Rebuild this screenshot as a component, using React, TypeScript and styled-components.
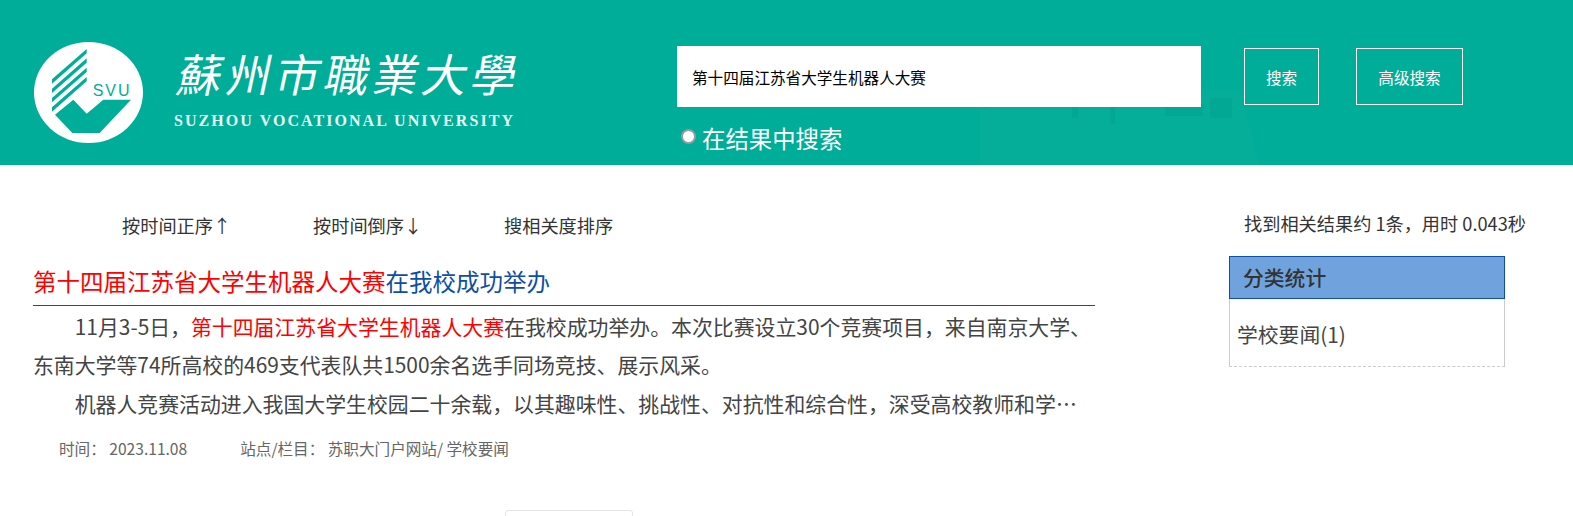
import React from 'react';
import styled, { createGlobalStyle } from 'styled-components';

const GlobalStyle = createGlobalStyle`
  html, body {
    margin: 0;
    height: 516px;
    overflow: hidden;
    background: #fff;
    font-family: "Noto Sans CJK SC", "Noto Sans", sans-serif;
    color: #333;
  }
`;

const Header = styled.header`
  position: relative;
  display: flex;
  height: 165px;
  background: #00ad98;
  overflow: hidden;
`;

const Watermark = styled.svg`
  position: absolute;
  left: 960px;
  top: 60px;
  width: 400px;
  height: 105px;
`;

const Brand = styled.div`
  position: relative;
  display: flex;
  width: 677px;
  padding: 42px 0 0 34px;
  box-sizing: border-box;
`;

const BrandText = styled.div`
  margin: -1px 0 0 29px;
  width: 345px;
`;

const BrandName = styled.div`
  height: 64px;
  font-family: "Noto Sans CJK TC", sans-serif;
  font-size: 45px;
  line-height: 64px;
  letter-spacing: 4px;
  color: #fff;
  font-weight: 400;
  white-space: nowrap;
  transform: skewX(-12deg);
  transform-origin: left bottom;
`;

const BrandEnglish = styled.div`
  margin: 4px 0 0 2px;
  font-family: "Liberation Serif", serif;
  font-size: 16px;
  font-weight: 700;
  letter-spacing: 2.05px;
  line-height: 24px;
  color: #e6f7f4;
  white-space: nowrap;
`;

const SearchArea = styled.div`
  position: relative;
  padding-top: 46px;
`;

const SearchRow = styled.div`
  display: flex;
  align-items: center;
`;

const SearchInput = styled.input`
  width: 524px;
  height: 61px;
  box-sizing: border-box;
  border: 0;
  padding: 0 15px;
  background: #fff;
  color: #000;
  font: 15.6px "Noto Sans CJK SC", sans-serif;
  outline: none;
`;

const SearchButton = styled.button<{ $width: number; $gap: number }>`
  width: ${(p) => p.$width}px;
  height: 57px;
  margin-left: ${(p) => p.$gap}px;
  box-sizing: border-box;
  border: 1px solid #fff;
  background: transparent;
  color: #fff;
  font: 15.6px "Noto Sans CJK SC", sans-serif;
  padding: 0;
`;

const WithinResults = styled.label`
  display: flex;
  align-items: center;
  height: 34px;
  margin-top: 14px;
  font-size: 23.4px;
  color: #fff;
`;

const Radio = styled.input`
  appearance: none;
  width: 15px;
  height: 15px;
  margin: 0 6px 4px 4px;
  box-sizing: border-box;
  border: 2px solid #9a9aa5;
  border-radius: 50%;
  background: #fff;
`;

const Body = styled.div`
  display: flex;
  align-items: flex-start;
`;

const Results = styled.main`
  width: 1095px;
  padding-left: 33px;
  box-sizing: border-box;
`;

const SortBar = styled.div`
  display: flex;
  padding: 45px 0 0 89px;
`;

const SortItem = styled.a`
  width: 191px;
  font-size: 18.2px;
  line-height: 30px;
  color: #333;
`;

const ResultTitle = styled.h2`
  margin: 23px 0 0;
  padding-bottom: 5px;
  font-size: 23.5px;
  font-weight: 400;
  line-height: 37px;
  color: #0d4ea6;
  border-bottom: 1px solid #0d4ea6;
`;

const Hit = styled.span`
  color: #f00;
`;

const Paragraph = styled.p<{ $clamp?: boolean }>`
  margin: 0;
  width: 1062px;
  font-size: 20.88px;
  line-height: 38.4px;
  text-indent: 2em;
  color: #444;
  ${(p) =>
    p.$clamp &&
    `
    white-space: nowrap;
    overflow: hidden;
    text-overflow: ellipsis;
  `}
`;

const Content = styled.div`
  margin-top: 1px;
`;

const Meta = styled.div`
  display: flex;
  gap: 53px;
  margin: 12px 0 0 26px;
  font-size: 15.6px;
  line-height: 28px;
  color: #666;
`;

const Pager = styled.div`
  width: 128px;
  height: 30px;
  margin: 48px 0 0 472px;
  box-sizing: border-box;
  border: 1px solid #e5e5e5;
  border-radius: 3px;
`;

const Aside = styled.aside`
  width: 320px;
  padding: 45px 0 0 134px;
`;

const Summary = styled.div`
  margin-left: 15px;
  font-size: 18.2px;
  line-height: 26px;
  color: #333;
  white-space: nowrap;
`;

const StatBox = styled.div`
  width: 276px;
  margin-top: 20px;
  border: 1px solid #ccc;
  border-bottom: 1px dashed #ccc;
  border-top: 0;
  box-sizing: border-box;
`;

const StatHead = styled.div`
  height: 43px;
  margin: 0 -1px;
  padding-left: 13px;
  box-sizing: border-box;
  background: #70a3dd;
  border: 1px solid #0d4ea6;
  font-size: 20.8px;
  font-weight: 500;
  line-height: 41px;
  color: #333;
`;

const StatItem = styled.div`
  height: 67px;
  padding-left: 7px;
  font-size: 20.8px;
  line-height: 71px;
  color: #444;
`;

const Logo = () => (
  <svg width="109" height="101" viewBox="27 22 327 303">
    <ellipse cx="190.5" cy="173.5" rx="163.5" ry="151.5" fill="#fff" />
    <g fill="#00ad98">
      <polygon points="185,43 185,56 81,147 81,134" />
      <polygon points="185,71 185,84 81,175 81,162" />
      <polygon points="185,99 185,112 81,203 81,190" />
      <polygon points="185,127 185,140 81,231 81,218" />
      <polygon points="90,240 145,195 185,237 235,195 318,195 224,295 142,295" />
    </g>
    <text x="203" y="185" fill="#00ad98" fontFamily="Liberation Sans" fontSize="48" letterSpacing="6">
      SVU
    </text>
  </svg>
);

const Building = () => (
  <Watermark viewBox="0 0 400 105" aria-hidden="true">
    <path d="M20 105 L20 50 Q140 20 280 30 L300 105 Z" fill="#04ae99" />
    <g fill="#02a893">
      <rect x="205" y="44" width="38" height="12" />
      <rect x="250" y="38" width="22" height="20" />
      <rect x="112" y="34" width="6" height="24" />
      <rect x="150" y="34" width="5" height="30" />
    </g>
  </Watermark>
);

export default function App() {
  return (
    <>
      <GlobalStyle />
      <Header>
        <Building />
        <Brand>
          <Logo />
          <BrandText>
            <BrandName>蘇州市職業大學</BrandName>
            <BrandEnglish>SUZHOU VOCATIONAL UNIVERSITY</BrandEnglish>
          </BrandText>
        </Brand>
        <SearchArea>
          <SearchRow>
            <SearchInput readOnly value="第十四届江苏省大学生机器人大赛" />
            <SearchButton $width={75} $gap={43}>搜索</SearchButton>
            <SearchButton $width={107} $gap={37}>高级搜索</SearchButton>
          </SearchRow>
          <WithinResults>
            <Radio type="radio" readOnly />
            在结果中搜索
          </WithinResults>
        </SearchArea>
      </Header>
      <Body>
        <Results>
          <SortBar>
            <SortItem>按时间正序↑</SortItem>
            <SortItem>按时间倒序↓</SortItem>
            <SortItem>搜相关度排序</SortItem>
          </SortBar>
          <ResultTitle>
            <Hit>第十四届江苏省大学生机器人大赛</Hit>在我校成功举办
          </ResultTitle>
          <Content>
            <Paragraph>
              11月3-5日，<Hit>第十四届江苏省大学生机器人大赛</Hit>在我校成功举办。本次比赛设立30个竞赛项目，来自南京大学、东南大学等74所高校的469支代表队共1500余名选手同场竞技、展示风采。
            </Paragraph>
            <Paragraph $clamp>
              机器人竞赛活动进入我国大学生校园二十余载，以其趣味性、挑战性、对抗性和综合性，深受高校教师和学生的喜爱与欢迎。
            </Paragraph>
          </Content>
          <Meta>
            <span>时间：&nbsp;2023.11.08</span>
            <span>站点/栏目：&nbsp;苏职大门户网站/ 学校要闻</span>
          </Meta>
          <Pager />
        </Results>
        <Aside>
          <Summary>找到相关结果约 1条，用时 0.043秒</Summary>
          <StatBox>
            <StatHead>分类统计</StatHead>
            <StatItem>学校要闻(1)</StatItem>
          </StatBox>
        </Aside>
      </Body>
    </>
  );
}
